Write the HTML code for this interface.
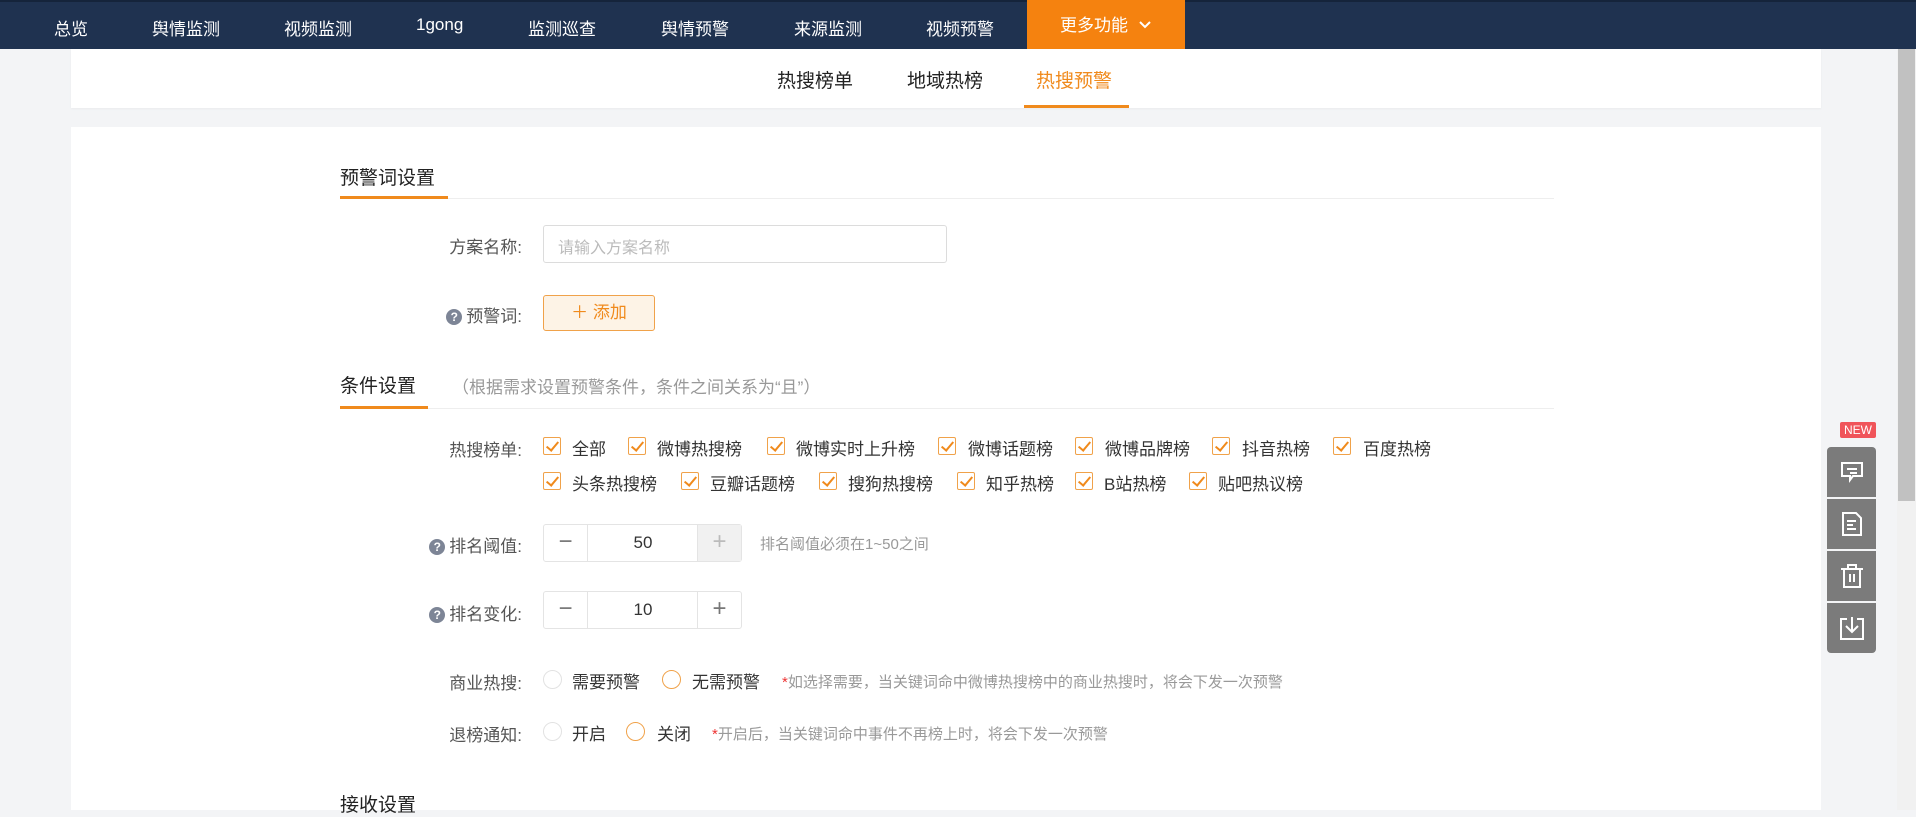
<!DOCTYPE html>
<html><head><meta charset="utf-8"><style>
*{margin:0;padding:0;box-sizing:border-box}
body{width:1916px;height:810px;overflow:hidden;background:#f3f4f6;font-family:"Liberation Sans","Noto Sans CJK SC",sans-serif;color:#333;position:relative;font-size:17px}
.a{position:absolute;white-space:nowrap}
.nav{position:absolute;left:0;top:0;width:1916px;height:49px;background:#1f3250;border-top:2px solid #15243b}
.nav span{position:absolute;top:13px;color:#fff;font-size:17px}
.more{position:absolute;left:1027px;top:0;width:158px;height:49px;background:#f5820f}
.panel{position:absolute;left:71px;width:1750px;background:#fff}
.lbl{position:absolute;right:1394px;color:#555;font-size:17px;white-space:nowrap}
.cb{position:absolute;width:18px;height:18px;border:1px solid #f0a24a;border-radius:2px}
.cb:after{content:"";position:absolute;left:5px;top:1px;width:5px;height:10px;border:solid #f08a1c;border-width:0 2px 2px 0;transform:rotate(40deg)}
.ct{position:absolute;font-size:17px;color:#333;white-space:nowrap}
.q{display:inline-block;width:16px;height:16px;border-radius:50%;background:#7d8596;color:#fff;font-size:12px;text-align:center;line-height:16px;font-weight:bold;margin-right:4px;vertical-align:1px}
.step{position:absolute;left:543px;width:199px;height:38px;border:1px solid #e4e4e4;border-radius:3px}
.step div{position:absolute;top:0;height:36px;width:44px;text-align:center;line-height:34px;font-size:24px;color:#777;font-weight:300}
.rd{position:absolute;width:19px;height:19px;border:1px solid #e2e2e2;border-radius:50%}
.rd.o{border-color:#f0a24a}
.hint{position:absolute;font-size:15px;color:#999;white-space:nowrap}
.tb{position:absolute;left:1827px;width:49px;height:50px;background:#7b7b7b}
</style></head><body>
<div class="nav">
<span style="left:54px">总览</span><span style="left:152px">舆情监测</span><span style="left:284px">视频监测</span><span style="left:416px">1gong</span><span style="left:528px">监测巡查</span><span style="left:661px">舆情预警</span><span style="left:794px">来源监测</span><span style="left:926px">视频预警</span>
</div>
<div class="more"><span class="a" style="left:33px;top:11px;color:#fff;font-size:17px">更多功能</span><svg class="a" style="left:111px;top:20px" width="14" height="10"><path d="M2 2l5 5 5-5" stroke="#fff" stroke-width="2" fill="none"/></svg></div>
<div class="panel" style="top:49px;height:59px;box-shadow:0 1px 2px rgba(0,0,0,.04)">
<span class="a" style="left:706px;top:17px;font-size:19px;color:#222">热搜榜单</span>
<span class="a" style="left:836px;top:17px;font-size:19px;color:#222">地域热榜</span>
<span class="a" style="left:965px;top:17px;font-size:19px;color:#f08a1c">热搜预警</span>
<div class="a" style="left:953px;top:56px;width:105px;height:3px;background:#f08a1c"></div>
</div>
<div class="panel" style="top:127px;height:683px"></div>
<span class="a" style="left:340px;top:163px;font-size:19px;color:#222">预警词设置</span>
<div class="a" style="left:340px;top:198px;width:1214px;height:1px;background:#eee"></div>
<div class="a" style="left:340px;top:196px;width:108px;height:3px;background:#f08a1c"></div>
<span class="lbl" style="top:233px">方案名称:</span>
<div class="a" style="left:543px;top:225px;width:404px;height:38px;border:1px solid #dcdcdc;border-radius:3px"><span class="a" style="left:14px;top:8px;color:#bbb;font-size:16px">请输入方案名称</span></div>
<span class="lbl" style="top:302px"><span class="q">?</span>预警词:</span>
<div class="a" style="left:543px;top:295px;width:112px;height:36px;border:1px solid #f0a24a;background:#fdf3e6;border-radius:3px;color:#f08a1c;font-size:17px;text-align:center;line-height:34px">＋ 添加</div>
<span class="a" style="left:340px;top:371px;font-size:19px;color:#222">条件设置</span>
<span class="a" style="left:452px;top:373px;font-size:17px;color:#999">（根据需求设置预警条件，条件之间关系为“且”）</span>
<div class="a" style="left:340px;top:408px;width:1214px;height:1px;background:#eee"></div>
<div class="a" style="left:340px;top:406px;width:88px;height:3px;background:#f08a1c"></div>
<span class="lbl" style="top:436px">热搜榜单:</span>
<div class="cb" style="left:543px;top:437px"></div><span class="ct" style="left:572px;top:435px">全部</span>
<div class="cb" style="left:628px;top:437px"></div><span class="ct" style="left:657px;top:435px">微博热搜榜</span>
<div class="cb" style="left:767px;top:437px"></div><span class="ct" style="left:796px;top:435px">微博实时上升榜</span>
<div class="cb" style="left:938px;top:437px"></div><span class="ct" style="left:968px;top:435px">微博话题榜</span>
<div class="cb" style="left:1075px;top:437px"></div><span class="ct" style="left:1105px;top:435px">微博品牌榜</span>
<div class="cb" style="left:1212px;top:437px"></div><span class="ct" style="left:1242px;top:435px">抖音热榜</span>
<div class="cb" style="left:1333px;top:437px"></div><span class="ct" style="left:1363px;top:435px">百度热榜</span>
<div class="cb" style="left:543px;top:472px"></div><span class="ct" style="left:572px;top:470px">头条热搜榜</span>
<div class="cb" style="left:681px;top:472px"></div><span class="ct" style="left:710px;top:470px">豆瓣话题榜</span>
<div class="cb" style="left:819px;top:472px"></div><span class="ct" style="left:848px;top:470px">搜狗热搜榜</span>
<div class="cb" style="left:957px;top:472px"></div><span class="ct" style="left:986px;top:470px">知乎热榜</span>
<div class="cb" style="left:1075px;top:472px"></div><span class="ct" style="left:1104px;top:470px">B站热榜</span>
<div class="cb" style="left:1189px;top:472px"></div><span class="ct" style="left:1218px;top:470px">贴吧热议榜</span>
<span class="lbl" style="top:532px"><span class="q">?</span>排名阈值:</span>
<div class="step" style="top:524px"><div style="left:0;border-right:1px solid #e4e4e4">−</div><div style="left:44px;width:110px;font-size:17px;color:#333;font-weight:normal;line-height:36px">50</div><div style="right:0;border-left:1px solid #e4e4e4;background:#f1f1f1;color:#bbb">+</div></div>
<span class="hint" style="left:760px;top:533px">排名阈值必须在1~50之间</span>
<span class="lbl" style="top:600px"><span class="q">?</span>排名变化:</span>
<div class="step" style="top:591px"><div style="left:0;border-right:1px solid #e4e4e4">−</div><div style="left:44px;width:110px;font-size:17px;color:#333;font-weight:normal;line-height:36px">10</div><div style="right:0;border-left:1px solid #e4e4e4">+</div></div>
<span class="lbl" style="top:669px">商业热搜:</span>
<div class="rd" style="left:543px;top:670px"></div><span class="ct" style="left:572px;top:668px">需要预警</span>
<div class="rd o" style="left:662px;top:670px"></div><span class="ct" style="left:692px;top:668px">无需预警</span>
<span class="hint" style="left:782px;top:671px"><span style="color:#e33">*</span>如选择需要，当关键词命中微博热搜榜中的商业热搜时，将会下发一次预警</span>
<span class="lbl" style="top:721px">退榜通知:</span>
<div class="rd" style="left:543px;top:722px"></div><span class="ct" style="left:572px;top:720px">开启</span>
<div class="rd o" style="left:626px;top:722px"></div><span class="ct" style="left:657px;top:720px">关闭</span>
<span class="hint" style="left:712px;top:723px"><span style="color:#e33">*</span>开启后，当关键词命中事件不再榜上时，将会下发一次预警</span>
<span class="a" style="left:340px;top:790px;font-size:19px;color:#222">接收设置</span>
<div class="a" style="left:1840px;top:422px;width:36px;height:16px;background:#f0545a;border-radius:2px;color:#fff;font-size:12px;text-align:center;line-height:16px">NEW</div>
<div class="tb" style="top:447px;border-radius:4px 4px 0 0"><svg class="a" style="left:13px;top:13px" width="24" height="24" fill="none" stroke="#fff" stroke-width="2"><path d="M2 3h20v13H13l-3 4v-4H2z"/><path d="M7 9h10M10 13h7"/></svg></div>
<div class="tb" style="top:499px"><svg class="a" style="left:14px;top:12px" width="22" height="26" fill="none" stroke="#fff" stroke-width="2"><path d="M2 2h13l5 5v17H2z"/><path d="M6 10h9M6 14h6M6 18h9"/></svg></div>
<div class="tb" style="top:551px"><svg class="a" style="left:12px;top:12px" width="26" height="26" fill="none" stroke="#fff" stroke-width="2"><path d="M2 6h22M9 6V2h8v4M5 6v18h16V6M11 11v8M15 11v8"/></svg></div>
<div class="tb" style="top:603px;border-radius:0 0 4px 4px"><svg class="a" style="left:12px;top:12px" width="26" height="26" fill="none" stroke="#fff" stroke-width="2"><path d="M8 4H2v20h22V4h-6M13 2v15M7 11l6 6 6-6"/></svg></div>
<div class="a" style="left:1897px;top:49px;width:19px;height:761px;background:#f1f1f1"></div>
<div class="a" style="left:1898px;top:49px;width:17px;height:452px;background:#c1c1c1"></div>
</body></html>
